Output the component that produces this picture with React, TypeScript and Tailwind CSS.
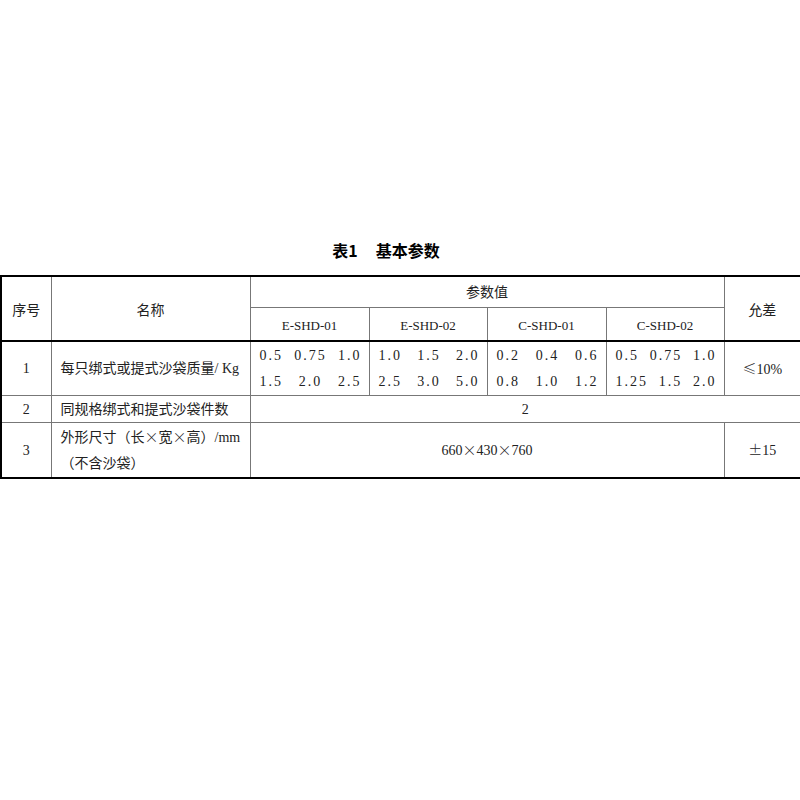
import React from "react";

const cjk = "font-['Liberation_Serif','Noto_Sans_CJK_SC',serif]";
const wide = "font-['Noto_Sans_CJK_SC',sans-serif] font-light";

function Nums({ a, b }: { a: string[]; b: string[] }) {
  return (
    <div className="flex flex-col pl-[9px] pr-[7px] pt-[1px] text-[14px] leading-[26px] tracking-[2px]">
      <div className="flex justify-between">
        {a.map((x, i) => (
          <span key={i}>{x}</span>
        ))}
      </div>
      <div className="flex justify-between">
        {b.map((x, i) => (
          <span key={i}>{x}</span>
        ))}
      </div>
    </div>
  );
}

function X() {
  return <span className={wide}>×</span>;
}

export default function App() {
  const g = "border-[#777]";
  return (
    <div className={`w-[800px] h-[800px] bg-white text-[#222] ${cjk}`}>
      <div className="pt-[240px] h-[275px] flex justify-center">
        <div className="ml-[-28px] flex text-[16px] font-bold font-['Noto_Sans_CJK_SC',sans-serif] leading-[20px] text-black">
          <span>表1</span>
          <span className="ml-[18px]">基本参数</span>
        </div>
      </div>
      <table className="border-collapse table-fixed w-[800px] border-2 border-black text-[14px]">
        <colgroup>
          <col className="w-[50px]" />
          <col className="w-[199px]" />
          <col className="w-[119px]" />
          <col className="w-[118px]" />
          <col className="w-[119px]" />
          <col className="w-[118px]" />
          <col className="w-[77px]" />
        </colgroup>
        <tbody>
          <tr className="h-[31px]">
            <td rowSpan={2} className={`border-r ${g} border-b-2 border-b-black text-center align-middle pt-[4px]`}>
              序号
            </td>
            <td rowSpan={2} className={`border-r ${g} border-b-2 border-b-black text-center align-middle pt-[4px]`}>
              名称
            </td>
            <td colSpan={4} className={`border-r ${g} border-b ${g} text-center align-middle pt-[1px]`}>
              参数值
            </td>
            <td rowSpan={2} className="border-b-2 border-b-black text-center align-middle pt-[4px]">
              允差
            </td>
          </tr>
          <tr className="h-[34px]">
            <td className={`border-r ${g} border-b-2 border-b-black text-center align-middle text-[13px] pt-[4px]`}>E-SHD-01</td>
            <td className={`border-r ${g} border-b-2 border-b-black text-center align-middle text-[13px] pt-[4px]`}>E-SHD-02</td>
            <td className={`border-r ${g} border-b-2 border-b-black text-center align-middle text-[13px] pt-[4px]`}>C-SHD-01</td>
            <td className={`border-r ${g} border-b-2 border-b-black text-center align-middle text-[13px] pt-[4px]`}>C-SHD-02</td>
          </tr>
          <tr className="h-[54px]">
            <td className={`border-r ${g} border-b ${g} text-center align-middle`}>1</td>
            <td className={`border-r ${g} border-b ${g} align-middle pl-[9px]`}>每只绑式或提式沙袋质量/ Kg</td>
            <td className={`border-r ${g} border-b ${g} align-top`}>
              <Nums a={["0.5", "0.75", "1.0"]} b={["1.5", "2.0", "2.5"]} />
            </td>
            <td className={`border-r ${g} border-b ${g} align-top`}>
              <Nums a={["1.0", "1.5", "2.0"]} b={["2.5", "3.0", "5.0"]} />
            </td>
            <td className={`border-r ${g} border-b ${g} align-top`}>
              <Nums a={["0.2", "0.4", "0.6"]} b={["0.8", "1.0", "1.2"]} />
            </td>
            <td className={`border-r ${g} border-b ${g} align-top`}>
              <Nums a={["0.5", "0.75", "1.0"]} b={["1.25", "1.5", "2.0"]} />
            </td>
            <td className={`border-b ${g} text-center align-middle`}>
              <span className={wide}>≤</span>10%
            </td>
          </tr>
          <tr className="h-[27px]">
            <td className={`border-r ${g} border-b ${g} text-center align-middle`}>2</td>
            <td className={`border-r ${g} border-b ${g} align-middle pl-[9px]`}>同规格绑式和提式沙袋件数</td>
            <td colSpan={5} className={`border-b ${g} text-center align-middle`}>2</td>
          </tr>
          <tr className="h-[54px]">
            <td className={`border-r ${g} text-center align-middle`}>3</td>
            <td className={`border-r ${g} align-middle pl-[9px] leading-[26px]`}>
              外形尺寸（长<X />宽<X />高）/mm
              <br />
              （不含沙袋）
            </td>
            <td colSpan={4} className={`border-r ${g} text-center align-middle`}>
              660<X />430<X />760
            </td>
            <td className="text-center align-middle">
              <span className={wide}>±</span>15
            </td>
          </tr>
        </tbody>
      </table>
    </div>
  );
}
